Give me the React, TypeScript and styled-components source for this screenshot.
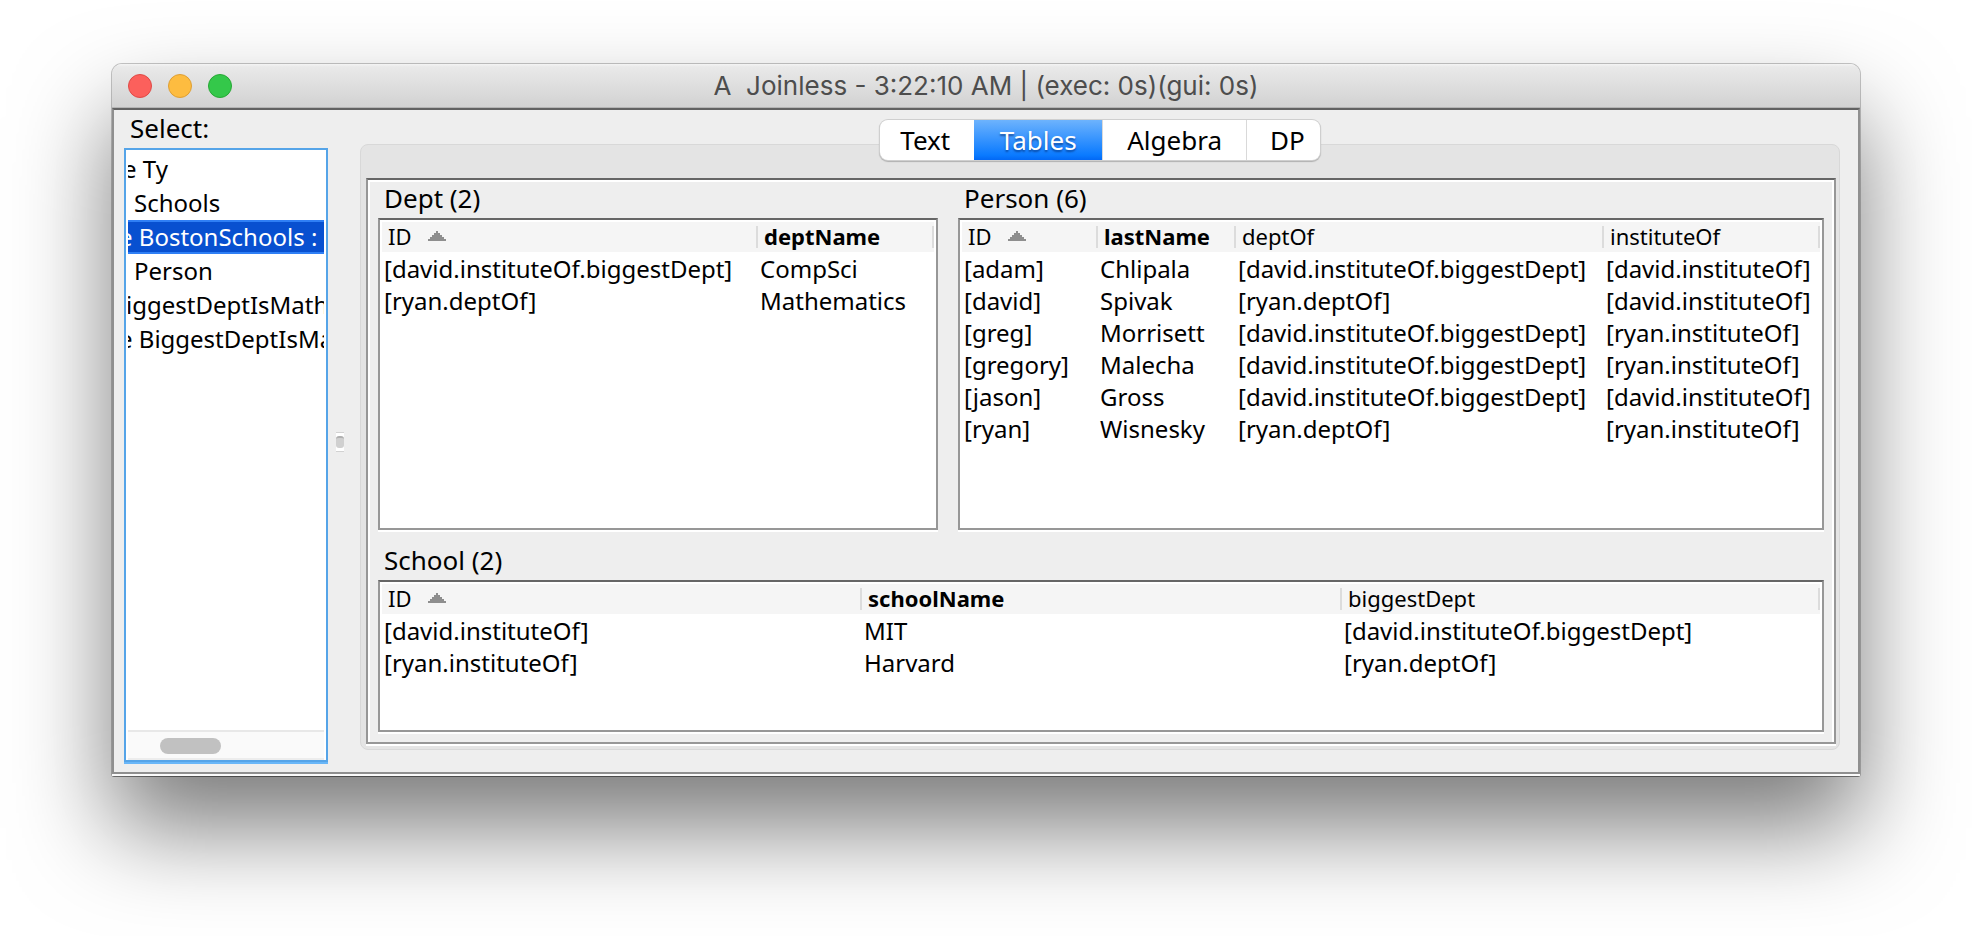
import React, { useState } from 'react';
import styled, { createGlobalStyle, css } from 'styled-components';

const GlobalStyle = createGlobalStyle`
  *, *::before, *::after { box-sizing: border-box; }
  body {
    margin: 0;
    background: #fff;
    color: #000;
    font-family: 'Noto Sans', 'Lucida Grande', sans-serif;
    font-size: 24px;
  }
  button { font: inherit; color: inherit; border: 0; margin: 0; padding: 0; background: none; }
`;

const Desktop = styled.main`
  display: flex;
  min-height: 100vh;
  padding: 64px 112px 160px;
  overflow: hidden;
`;

const Window = styled.section`
  display: flex;
  flex: 1;
  flex-direction: column;
  min-width: 0;
  border-radius: 10px 10px 2px 2px;
  box-shadow:
    0 0 0 1px rgba(0, 0, 0, 0.22),
    0 1px 0 0 rgba(0, 0, 0, 0.3),
    0 52px 96px rgba(0, 0, 0, 0.52);
`;

const TitleBar = styled.header`
  display: grid;
  grid-template-columns: 1fr auto 1fr;
  align-items: center;
  height: 44px;
  padding: 0 16px;
  border-bottom: 1px solid #b4b4b4;
  border-radius: 10px 10px 0 0;
  background: linear-gradient(#f4f4f4, #e9e9e9 3px, #d2d2d2);
`;

const Lights = styled.div`
  display: flex;
  gap: 16px;
`;

const Light = styled.button<{ $fill: string; $edge: string }>`
  width: 24px;
  height: 24px;
  border: 1px solid ${(p) => p.$edge};
  border-radius: 50%;
  background: ${(p) => p.$fill};
`;

const Title = styled.h1`
  margin: 0;
  color: #4d4d4d;
  font-family: Inter, sans-serif;
  font-size: 26px;
  font-weight: 400;
  line-height: 32px;
  white-space: pre;
`;

const Body = styled.div`
  display: flex;
  flex: 1;
  min-height: 0;
  padding: 0 18px 8px 10px;
  border: 2px solid #8f8f8f;
  border-top-color: #626262;
  background: #eee;
`;

const BottomEdge = styled.div`
  height: 2px;
  background: #fafafa;
`;

const Sidebar = styled.aside`
  display: flex;
  flex-direction: column;
  width: 204px;
`;

const SidebarLabel = styled.h2`
  height: 38px;
  margin: 0;
  padding-left: 6px;
  font-size: 26px;
  font-weight: 400;
  line-height: 36px;
`;

const ListBox = styled.div`
  display: flex;
  flex: 1;
  flex-direction: column;
  margin-bottom: 2px;
  padding: 2px 2px 0;
  border: 2px solid #55a4e8;
  background: #fff;
  box-shadow: 0 2px 0 #68b6f8;
`;

const List = styled.ul`
  flex: 1;
  margin: 0;
  padding: 0;
  overflow: hidden;
  list-style: none;
`;

const Item = styled.button<{ $scrolled: number; $selected: boolean }>`
  display: block;
  width: 100%;
  height: 34px;
  overflow: hidden;
  line-height: 34px;
  text-align: left;
  text-indent: ${(p) => p.$scrolled}px;
  white-space: pre;
  ${(p) =>
    p.$selected &&
    css`
      background: #0850d0;
      color: #fff;
      box-shadow: inset 0 2px #2f7ff5, inset 0 -2px #2f7ff5;
    `}
`;

const ScrollTrack = styled.div`
  height: 30px;
  padding: 6px 32px;
  border-top: 2px solid #e8e8e8;
  border-bottom: 2px solid #ededed;
  background: #fafafa;
`;

const ScrollThumb = styled.div`
  width: 61px;
  height: 16px;
  border-radius: 8px;
  background: #c1c1c1;
`;

const Divider = styled.div`
  display: flex;
  align-items: center;
  width: 32px;
  padding: 10px 8px 0;
`;

const Grip = styled.div`
  width: 8px;
  height: 20px;
  padding: 3px 0;
  border: solid #d2d2d2;
  border-width: 1px 0;
  background: #fff;

  &::before {
    content: '';
    display: block;
    height: 12px;
    border-top: 2px solid #b0b0b0;
    border-radius: 3px;
    background: #d0d0d0;
  }
`;

const Main = styled.div`
  display: flex;
  flex: 1;
  flex-direction: column;
  min-width: 0;
  padding: 10px 0 14px;
`;

const Tabs = styled.div`
  z-index: 1;
  display: flex;
  align-self: center;
  height: 40px;
  border-radius: 8px;
  background: #fff;
  box-shadow: 0 0 0 1px #cfcfcf, 0 1px 1px 1px #b0b0b0;
`;

const Tab = styled.button<{ $active: boolean }>`
  min-width: 128px;
  padding: 0 24px;
  font-size: 26px;
  line-height: 40px;

  & + & { border-left: 1px solid #d9d9d9; }
  &:first-child { min-width: 0; padding: 0 24px 0 20px; }
  &:last-child { min-width: 0; padding: 0 15px 0 23px; }

  ${(p) =>
    p.$active &&
    css`
      && { border-left: 0; }
      background: linear-gradient(#6db3fd, #0a7aff 88%, #0268f5);
      color: #fff;
      text-shadow: 0 2px 2px rgba(0, 40, 110, 0.6);
    `}
`;

const TabPane = styled.div`
  display: flex;
  flex: 1;
  margin-top: -16px;
  padding: 33px 3px 5px 5px;
  border: 1px solid #d8d8d8;
  border-radius: 8px;
  background: #e4e4e4;
`;

const Panel = styled.div`
  display: flex;
  flex: 1;
  flex-direction: column;
  gap: 14px;
  min-width: 0;
  padding: 2px 10px 10px;
  border: 2px solid #979797;
  border-top-color: #666;
  background: #eee;
  box-shadow: inset 2px 2px #fff, inset -2px 0 #fff, 0 2px #fff;
`;

const Row = styled.div<{ $grow: number }>`
  display: flex;
  flex: ${(p) => p.$grow} 1 0;
  gap: 20px;
`;

const Entity = styled.section<{ $grow: number }>`
  display: flex;
  flex: ${(p) => p.$grow} 1 0;
  flex-direction: column;
  min-width: 0;
`;

const EntityName = styled.h2`
  height: 36px;
  margin: 0;
  padding-left: 6px;
  font-size: 26px;
  font-weight: 400;
  line-height: 32px;
`;

const Frame = styled.div`
  flex: 1;
  padding: 2px 2px 0;
  border: 2px solid #979797;
  border-top-color: #666;
  background: #fff;
  box-shadow: 0 2px #fff;
  overflow: hidden;
`;

const Table = styled.table`
  width: 100%;
  border-collapse: collapse;
  table-layout: fixed;
`;

const HeadCell = styled.th<{ $width?: number; $bold: boolean }>`
  width: ${(p) => (p.$width ? `${p.$width}px` : 'auto')};
  height: 30px;
  padding: 0 0 2px 6px;
  background: linear-gradient(#dcdcdc, #dcdcdc) right center / 2px 22px no-repeat #f5f5f5;
  font-size: 22px;
  font-weight: ${(p) => (p.$bold ? 700 : 400)};
  line-height: 28px;
  text-align: left;
  white-space: nowrap;
`;

const SortMark = styled.svg`
  width: 18px;
  height: 10px;
  margin-left: 16px;
  vertical-align: 4px;
`;

const Cell = styled.td`
  height: 32px;
  padding: 2px 0 0 2px;
  line-height: 30px;
  white-space: nowrap;
`;

type Column = { name: string; width?: number; bold?: boolean; sorted?: boolean };
type EntityData = { name: string; columns: Column[]; rows: string[][] };

const dept: EntityData = {
  name: 'Dept',
  columns: [
    { name: 'ID', width: 376, sorted: true },
    { name: 'deptName', bold: true },
  ],
  rows: [
    ['[david.instituteOf.biggestDept]', 'CompSci'],
    ['[ryan.deptOf]', 'Mathematics'],
  ],
};

const person: EntityData = {
  name: 'Person',
  columns: [
    { name: 'ID', width: 136, sorted: true },
    { name: 'lastName', width: 138, bold: true },
    { name: 'deptOf', width: 368 },
    { name: 'instituteOf' },
  ],
  rows: [
    ['[adam]', 'Chlipala', '[david.instituteOf.biggestDept]', '[david.instituteOf]'],
    ['[david]', 'Spivak', '[ryan.deptOf]', '[david.instituteOf]'],
    ['[greg]', 'Morrisett', '[david.instituteOf.biggestDept]', '[ryan.instituteOf]'],
    ['[gregory]', 'Malecha', '[david.instituteOf.biggestDept]', '[ryan.instituteOf]'],
    ['[jason]', 'Gross', '[david.instituteOf.biggestDept]', '[david.instituteOf]'],
    ['[ryan]', 'Wisnesky', '[ryan.deptOf]', '[ryan.instituteOf]'],
  ],
};

const school: EntityData = {
  name: 'School',
  columns: [
    { name: 'ID', width: 480, sorted: true },
    { name: 'schoolName', width: 480, bold: true },
    { name: 'biggestDept' },
  ],
  rows: [
    ['[david.instituteOf]', 'MIT', '[david.instituteOf.biggestDept]'],
    ['[ryan.instituteOf]', 'Harvard', '[ryan.deptOf]'],
  ],
};

const declarations = [
  { text: 'e Ty', scrolled: -5 },
  { text: 'Schools', scrolled: 6 },
  { text: 'e BostonSchools :', scrolled: -9 },
  { text: 'Person', scrolled: 6 },
  { text: 'iggestDeptIsMath', scrolled: -2 },
  { text: 'e BiggestDeptIsMa', scrolled: -9 },
];

const tabs = ['Text', 'Tables', 'Algebra', 'DP'];

function EntityTable({ data, grow = 1 }: { data: EntityData; grow?: number }) {
  const id = `entity-${data.name}`;
  return (
    <Entity $grow={grow}>
      <EntityName id={id}>{`${data.name} (${data.rows.length})`}</EntityName>
      <Frame>
        <Table aria-labelledby={id}>
          <thead>
            <tr>
              {data.columns.map((c) => (
                <HeadCell key={c.name} scope="col" $width={c.width} $bold={!!c.bold}>
                  {c.name}
                  {c.sorted && (
                    <SortMark viewBox="0 0 18 10" shapeRendering="crispEdges" aria-hidden="true">
                      <path
                        fill="#8e8e8e"
                        d="M8 0h2v2h2v2h2v2h2v2h2v2H0V8h2V6h2V4h2V2h2z"
                      />
                    </SortMark>
                  )}
                </HeadCell>
              ))}
            </tr>
          </thead>
          <tbody>
            {data.rows.map((r) => (
              <tr key={r[0]}>
                {r.map((value, i) => (
                  <Cell key={i}>{value}</Cell>
                ))}
              </tr>
            ))}
          </tbody>
        </Table>
      </Frame>
    </Entity>
  );
}

export default function App() {
  const [selected, setSelected] = useState(2);
  const [tab, setTab] = useState('Tables');

  return (
    <>
      <GlobalStyle />
      <Desktop>
        <Window>
          <TitleBar>
            <Lights>
              <Light aria-label="Close" $fill="#fc605c" $edge="#df4a46" />
              <Light aria-label="Minimize" $fill="#fdbc40" $edge="#de9f34" />
              <Light aria-label="Zoom" $fill="#34c84a" $edge="#27a835" />
            </Lights>
            <Title>{'A  Joinless - 3:22:10 AM | (exec: 0s)(gui: 0s)'}</Title>
          </TitleBar>
          <Body>
            <Sidebar>
              <SidebarLabel>Select:</SidebarLabel>
              <ListBox>
                <List>
                  {declarations.map((d, i) => (
                    <li key={d.text}>
                      <Item
                        $scrolled={d.scrolled}
                        $selected={i === selected}
                        onClick={() => setSelected(i)}
                      >
                        {d.text}
                      </Item>
                    </li>
                  ))}
                </List>
                <ScrollTrack>
                  <ScrollThumb />
                </ScrollTrack>
              </ListBox>
            </Sidebar>
            <Divider>
              <Grip />
            </Divider>
            <Main>
              <Tabs role="tablist">
                {tabs.map((name) => (
                  <Tab
                    key={name}
                    role="tab"
                    aria-selected={name === tab}
                    $active={name === tab}
                    onClick={() => setTab(name)}
                  >
                    {name}
                  </Tab>
                ))}
              </Tabs>
              <TabPane role="tabpanel">
                <Panel>
                  <Row $grow={348}>
                    <EntityTable data={dept} grow={560} />
                    <EntityTable data={person} grow={866} />
                  </Row>
                  <Row $grow={188}>
                    <EntityTable data={school} />
                  </Row>
                </Panel>
              </TabPane>
            </Main>
          </Body>
          <BottomEdge />
        </Window>
      </Desktop>
    </>
  );
}
